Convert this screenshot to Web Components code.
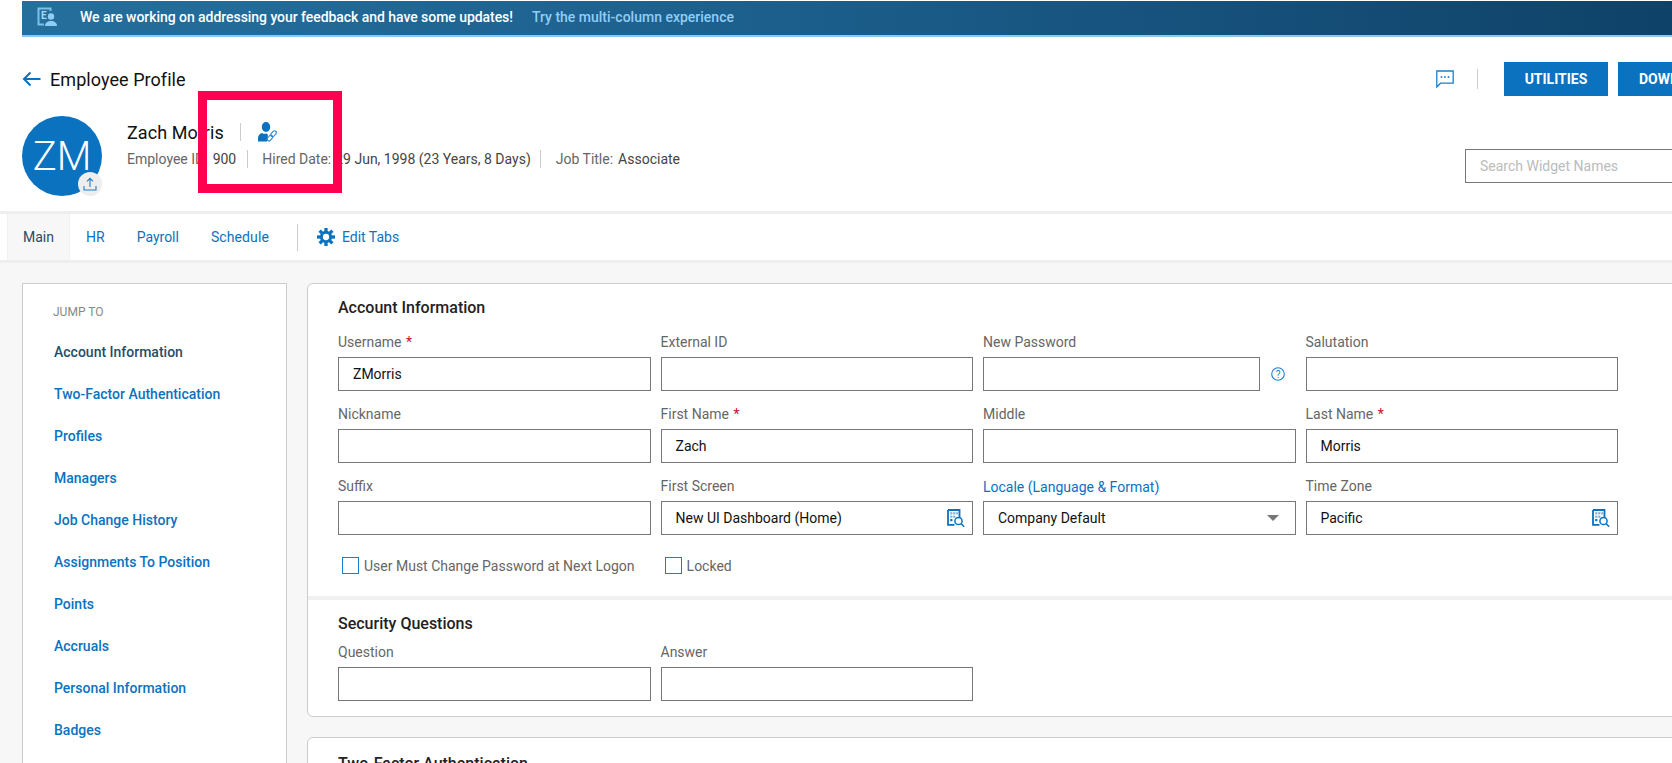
<!DOCTYPE html>
<html lang="en"><head><meta charset="utf-8"><title>Employee Profile</title>
<style>
html,body{margin:0;padding:0;height:763px;width:1672px;overflow:hidden;background:#fff;font-family:Roboto,"Liberation Sans",sans-serif;font-size:14px}
</style></head><body>
<emp-page></emp-page>
<script>
const teeth=[0,45,90,135,180,225,270,315].map(a=>`<rect x="9.800" y="0" width="4.400" height="6" transform="rotate(${a} 12 12)"/>`).join('');
const ICONS={
 lookup:`<svg width="18" height="18" viewBox="0 0 18 18" fill="none"><path d="M1 1h11.500v8M1 1v14.800h6.500" stroke="#0b72c0" stroke-width="1.800"/><rect x="3.200" y="3.200" width="2.200" height="2.200" fill="#7fb2da"/><rect x="6.200" y="3.200" width="2.200" height="2.200" fill="#7fb2da"/><rect x="9.200" y="3.200" width="2.200" height="2.200" fill="#7fb2da"/><rect x="3.200" y="6.600" width="2.200" height="2.200" fill="#7fb2da"/><rect x="6.200" y="6.600" width="2.200" height="2.200" fill="#7fb2da"/><rect x="3.200" y="10" width="2.200" height="2.200" fill="#0b72c0"/><circle cx="11.500" cy="12" r="3.600" stroke="#0b72c0" stroke-width="1.500" fill="#fff"/><path d="M14.200 14.700l3 3" stroke="#0b72c0" stroke-width="1.600"/></svg>`,
 gear:`<svg width="18" height="18" viewBox="0 0 24 24"><g fill="#0b72c0">${teeth}</g><circle cx="12" cy="12" r="6.200" fill="none" stroke="#0b72c0" stroke-width="4"/></svg>`
};
function def(name,css,html){
 customElements.define(name,class extends HTMLElement{
  constructor(){super();const r=this.attachShadow({mode:'open'});
   r.innerHTML=`<style>${css}</style>${typeof html==='function'?html(this):html}`;}
 });
}
def('emp-banner',`:host{display:flex;align-items:center;box-sizing:border-box;height:36px;margin:1px 0 0 22px;padding:0 0 2px 15px;background:linear-gradient(90deg,#256f9c 0%,#1c5f8d 45%,#0f4268 100%);border-bottom:2px solid #8cc6f2;color:#fff;font-weight:500;font-size:14px;white-space:nowrap}
 svg{margin-right:22px;flex:none}.t{letter-spacing:-.05px}.l{color:#8fcdf7;margin-left:19px}`,
 `<svg width="21" height="21" viewBox="0 0 21 21" fill="none"><path d="M13.500 4V1.500H1.500v16H7" stroke="#7fbfec" stroke-width="2"/><text x="4" y="12" font-family="Roboto" font-size="10" font-weight="700" fill="#a6d8fa">E</text><circle cx="14" cy="9.500" r="3.200" fill="#8fcdf7"/><path d="M8 19c0-3.500 2.800-5 6-5s6 1.500 6 5z" fill="#8fcdf7"/></svg><span class="t">We are working on addressing your feedback and have some updates!</span><span class="l">Try the multi-column experience</span>`);
def('emp-header',`:host{display:block;padding:25px 0 15px 22px;height:174px;box-sizing:border-box;position:relative;color:#111}
 .top{display:flex;align-items:center;height:34px}
 .arrow{margin-right:9px;flex:none}.t{font-size:18px;color:#111;flex:1;letter-spacing:.06px}
 .chat{margin-right:23px}.vr{width:1px;height:20px;background:#ccc;margin-right:26px}
 .btn{background:#0b72c0;color:#fff;font-weight:700;font-size:14px;height:34px;display:flex;align-items:center;justify-content:center;width:104px;margin-right:10px;flex:none}
 .clip{width:54px;margin-right:0;justify-content:flex-start;padding-left:21px;box-sizing:border-box;overflow:hidden;white-space:nowrap}
 .row{display:flex;margin-top:20px}
 .av{width:80px;height:80px;border-radius:50%;background:#0b72c0;color:#fff;font-size:40px;font-weight:300;display:flex;align-items:center;justify-content:center;position:relative;flex:none}
 .up{position:absolute;right:0;bottom:0;width:24px;height:24px;border-radius:50%;background:#eee;display:flex;align-items:center;justify-content:center}
 .info{margin-left:25px;flex:1;padding-top:6px}
 .name{display:flex;align-items:center;height:20px;font-size:18px;color:#111;letter-spacing:.05px}
 .name i{width:1px;height:18px;background:#ccc;margin:0 17px 0 16px}
 .meta{display:flex;align-items:center;margin-top:7px;font-size:14px;color:#666;height:20px;white-space:nowrap}
 .meta b{font-weight:400;color:#444;margin-left:5px}
 .meta b.v{margin-left:4px}
 .meta i{width:1px;height:18px;background:#ccc;margin:0 14px 0 11px}
 .meta i.n{margin:0 15px 0 9px}
 .search{box-sizing:border-box;width:230px;height:34px;border:1px solid #777;margin-top:33px;padding-left:14px;display:flex;align-items:center;color:#bbb;font-size:14px;flex:none;margin-right:-23px}
 .mark{position:absolute;left:198px;top:54px;width:144px;height:102px;box-sizing:border-box;border:9px solid #ff0050}`,
 `<div class="top"><svg class="arrow" width="19" height="16" viewBox="0 0 19 16" fill="none"><path d="M18.500 8H2M8.500 1.500L2 8l6.500 6.500" stroke="#0b72c0" stroke-width="2"/></svg><div class="t">Employee Profile</div>
 <svg class="chat" width="18" height="18" viewBox="0 0 18 18" fill="none"><path d="M.8 1h16.400v12.200H4.500L.8 17z" stroke="#1c7fcc" stroke-width="1.300"/><circle cx="5.500" cy="7" r=".9" fill="#1c7fcc"/><circle cx="9" cy="7" r=".9" fill="#1c7fcc"/><circle cx="12.500" cy="7" r=".9" fill="#1c7fcc"/></svg><div class="vr"></div><div class="btn">UTILITIES</div><div class="btn clip">DOWNLOAD</div></div>
 <div class="row"><div class="av">ZM<div class="up"><svg width="14" height="14" viewBox="0 0 14 14" fill="none"><path d="M7 10V1.500M4 4.300L7 1.300l3 3M1 9v4h12V9" stroke="#1c7fcc" stroke-width="1.100"/></svg></div></div>
 <div class="info"><div class="name"><span>Zach Morris</span><i></i><svg width="19" height="20" viewBox="0 0 19 20"><ellipse cx="8" cy="5" rx="4.200" ry="5" fill="#0b72c0"/><path d="M0 19.500V16c0-2.800 1.800-4.300 3.800-5 1.500 1 3.500 1 5 .6L10 13l-1 6.500z" fill="#0b72c0"/><g fill="none" stroke="#2a86d2" stroke-width="1.100"><rect x="13.800" y="8.500" width="3.600" height="6.500" rx="1.800" transform="rotate(40 15.600 11.700)"/><rect x="10.200" y="12.800" width="3.600" height="6.500" rx="1.800" transform="rotate(40 12 16)"/></g></svg></div>
 <div class="meta"><span>Employee ID:</span><b>900</b><i></i><span>Hired Date:</span><b class="v">29 Jun, 1998 (23 Years, 8 Days)</b><i class="n"></i><span>Job Title:</span><b>Associate</b></div></div>
 <div class="search">Search Widget Names</div></div><div class="mark"></div>`);
def('emp-tabs',`:host{display:flex;align-items:center;height:52px;box-sizing:border-box;border-top:3px solid #eee;border-bottom:3px solid #eee;padding-left:7px;font-size:14px;color:#0b72c0;background:#fff}
 .m{width:63px;height:100%;background:#f7f7f7;color:#2b4a63;display:flex;align-items:center;justify-content:center;border-left:1px solid #f0f0f0;border-right:1px solid #f0f0f0;box-sizing:border-box}
 span.a{margin-left:16px}span.b{margin-left:32px}span.c{margin-left:32px;letter-spacing:.1px}
 i{width:1px;height:27px;background:#ccc;margin:0 19px 0 28px}svg{margin-right:7px}`,
 `<div class="m">Main</div><span class="a">HR</span><span class="b">Payroll</span><span class="c">Schedule</span><i></i>${ICONS.gear}<span>Edit Tabs</span>`);
def('emp-sidebar',`:host{display:block;width:265px;flex:none;box-sizing:border-box;height:520px;background:#fff;border:1px solid #ccc;padding:18px 0 0 31px;font-size:14px;font-weight:500;color:#0b72c0}
 .j{font-size:12px;font-weight:400;color:#888;height:20px;line-height:20px;margin:0 0 20px -1px}
 ::slotted(*){display:block;height:42px;line-height:20px}`,
 `<div class="j">JUMP TO</div><slot></slot>`);
def('emp-card',`:host{display:block;background:#fff;border:1px solid #ccc;border-radius:6px;width:1500px;box-sizing:border-box;margin-bottom:20px}`,`<slot></slot>`);
def('emp-section',`:host{display:block;padding:12px 0 15px 30px}
 h3{margin:0 0 12px;font-size:16px;font-weight:500;line-height:24px;color:#222}
 :host([compact]) h3{margin-bottom:6px}
 .g{display:grid;grid-template-columns:repeat(4,312.5px);column-gap:10px;row-gap:13px}
 :host([top]){padding-top:14px}`,
 el=>`<h3>${el.getAttribute('title')}</h3><div class="g"><slot></slot></div><slot name="after"></slot>`);
def('emp-field',`:host{display:block;min-width:0}
 .l{height:20px;line-height:20px;font-size:14px;color:#666;margin-bottom:5px;white-space:nowrap}
 :host([link]) .l{color:#0b72c0;line-height:22px}
 :host([select]) .i span{padding-bottom:1px}
 .s{color:#c8102e;margin-left:1px}
 .w{display:flex;align-items:center}
 .i{flex:1;min-width:0;box-sizing:border-box;height:34px;border:1px solid #777;display:flex;align-items:center;padding:0 7px 0 14px;font-size:14px;color:#111;background:#fff}
 .i span{flex:1}.h{margin:0 11px;flex:none}
 .ar{width:0;height:0;border-left:6px solid transparent;border-right:6px solid transparent;border-top:6px solid #777;margin-right:9px}`,
 el=>{const a=n=>el.hasAttribute(n);
  return `<div class="l">${el.getAttribute('label')}${a('req')?' <span class="s">*</span>':''}</div><div class="w"><div class="i"><span>${el.getAttribute('value')||''}</span>${a('lookup')?ICONS.lookup:''}${a('select')?'<div class="ar"></div>':''}</div>${a('help')?'<svg class="h" width="14" height="14" viewBox="0 0 14 14" fill="none"><circle cx="7" cy="7" r="6.300" stroke="#1c7fcc" stroke-width="1.100"/><text x="7" y="10.500" text-anchor="middle" font-family="Roboto" font-size="10" fill="#1c7fcc">?</text></svg>':''}</div>`;});
def('emp-check',`:host{display:inline-flex;align-items:center;height:17px;font-size:14px;color:#666;white-space:nowrap}
 i{width:17px;height:17px;box-sizing:border-box;border:1.500px solid #1c7fcc;margin-right:5px;flex:none}`,
 `<i></i><slot></slot>`);
def('emp-checks',`:host{display:flex;gap:30px;padding:22px 0 7px 4px}`,`<slot></slot>`);
def('emp-band',`:host{display:block;height:4px;background:#f0f0f0}`,``);
def('emp-page',`:host{display:block;width:1672px}
 .c{display:flex;gap:20px;background:#f7f7f7;padding:20px 0 0 22px;height:500px;overflow:hidden;box-sizing:border-box}`,
 `<emp-banner></emp-banner><emp-header></emp-header><emp-tabs></emp-tabs>
 <div class="c"><emp-sidebar><span style="color:#284c68">Account Information</span><span>Two-Factor Authentication</span><span>Profiles</span><span>Managers</span><span>Job Change History</span><span>Assignments To Position</span><span>Points</span><span>Accruals</span><span>Personal Information</span><span>Badges</span></emp-sidebar>
 <div><emp-card><emp-section title="Account Information">
 <emp-field label="Username" req value="ZMorris"></emp-field><emp-field label="External ID"></emp-field><emp-field label="New Password" help></emp-field><emp-field label="Salutation"></emp-field>
 <emp-field label="Nickname"></emp-field><emp-field label="First Name" req value="Zach"></emp-field><emp-field label="Middle"></emp-field><emp-field label="Last Name" req value="Morris"></emp-field>
 <emp-field label="Suffix"></emp-field><emp-field label="First Screen" value="New UI Dashboard (Home)" lookup></emp-field><emp-field label="Locale (Language &amp; Format)" link value="Company Default" select></emp-field><emp-field label="Time Zone" value="Pacific" lookup></emp-field>
 <emp-checks slot="after"><emp-check>User Must Change Password at Next Logon</emp-check><emp-check>Locked</emp-check></emp-checks>
 </emp-section><emp-band></emp-band><emp-section title="Security Questions" compact><emp-field label="Question"></emp-field><emp-field label="Answer"></emp-field></emp-section></emp-card>
 <emp-card><emp-section title="Two-Factor Authentication" top></emp-section></emp-card></div></div>`);
</script>
</body></html>
